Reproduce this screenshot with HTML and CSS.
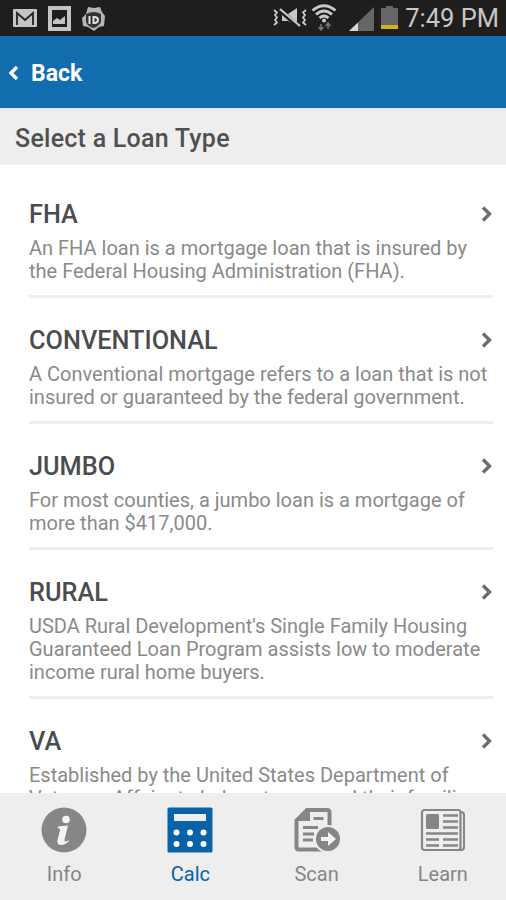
FILE: index.html
```html
<!DOCTYPE html>
<html lang="en">
<head>
    <meta charset="UTF-8">
    <meta name="viewport" content="width=device-width, initial-scale=1.0">
    <title>Select a Loan Type</title>
    <link rel="stylesheet" href="styles.css">
</head>
<body>
    <div class="status-bar">
        <div class="notifications">
            <svg class="mail" width="26" height="20" viewBox="0 0 26 20">
                <rect x="1" y="1" width="24" height="18" rx="1" fill="#c4c4c4"/>
                <path d="M5 17V5l8 7 8-7v12" fill="none" stroke="#222" stroke-width="1.800"/>
            </svg>
            <svg class="photo" width="23" height="25" viewBox="0 0 23 25">
                <path d="M0 0h23v25H0zM4 4v17h15V4z" fill="#c4c4c4" fill-rule="evenodd"/>
                <path d="M5 18v-3l4-3 3 2 5-4v8z" fill="#c4c4c4"/>
            </svg>
            <svg class="shield" width="25" height="25" viewBox="0 0 25 25">
                <path d="M7 1l6 1 6-1 2 5 3 4-1 10-5 1-5 4-6-4-5-1-1-8 4-4z" fill="#b5b5b5"/>
                <path d="M5 8q8-4 15 0v8q-2 4-7.500 6Q6 20 5 16z" fill="#333"/>
                <path d="M8.500 10v8M12.500 11v6h1.500q3-.5 3-3t-3-3z" fill="none" stroke="#ddd" stroke-width="2"/>
            </svg>
        </div>
        <div class="system">
            <svg class="vibrate" width="34" height="22" viewBox="0 0 34 22">
                <path d="M9 7h6l9-6v18l-9-5H9z" fill="#c8c8c8"/>
                <path d="M8 4l18 16" stroke="#1e1e1e" stroke-width="4.500"/>
                <path d="M7 2l20 17" stroke="#c8c8c8" stroke-width="2.200"/>
                <path d="M1 3l3 2.500-2 2.500 2 2.500-2 2.500 2 2.500-3 2.500M33 3l-3 2.500 2 2.500-2 2.500 2 2.500-2 2.500 3 2.500" fill="none" stroke="#c8c8c8" stroke-width="1.800"/>
            </svg>
            <svg class="wifi" width="26" height="27" viewBox="0 0 26 27">
                <g fill="none" stroke="#c8c8c8" stroke-width="2.800">
                    <path d="M1.500 6.500Q13-3 24.500 6.500"/>
                    <path d="M5 10.500q8-7 16 0"/>
                    <path d="M8.500 14q4.500-4 9 0"/>
                </g>
                <circle cx="13" cy="16.500" r="2" fill="#c8c8c8"/>
                <path d="M10 26v-6M7.500 23l2.500 3 2.500-3M17 19v6M14.500 22l2.500-3 2.500 3" fill="none" stroke="#777" stroke-width="1.500"/>
            </svg>
            <svg class="signal" width="25" height="24" viewBox="0 0 25 24">
                <path d="M0 24L25 0v24z" fill="#666"/>
                <path d="M0 24l9-8.500V24z" fill="#d8d8d8"/>
            </svg>
            <svg class="battery" width="17" height="23" viewBox="0 0 17 23">
                <path d="M0 2h5V0h7v2h5v17H0z" fill="#666"/>
                <path d="M0 19h17v4H0z" fill="#d0b219"/>
            </svg>
            <span class="clock">7:49 PM</span>
        </div>
    </div>

    <header class="nav-bar">
        <a class="back" href="#">
            <svg width="11" height="16" viewBox="0 0 11 16"><path d="M9 2L3 8l6 6" fill="none" stroke="#fff" stroke-width="3.400"/></svg>
            <span>Back</span>
        </a>
    </header>

    <h1 class="page-title">Select a Loan Type</h1>

    <main class="loan-list">
        <section class="loan">
            <div class="loan-head">
                <h2>FHA</h2>
                <svg class="arrow" width="12" height="16" viewBox="0 0 12 16"><path d="M2 1.500L8.500 8 2 14.500" /></svg>
            </div>
            <p>An FHA loan is a mortgage loan that is insured by<br>the Federal Housing Administration (FHA).</p>
        </section>
        <section class="loan">
            <div class="loan-head">
                <h2>CONVENTIONAL</h2>
                <svg class="arrow" width="12" height="16" viewBox="0 0 12 16"><path d="M2 1.500L8.500 8 2 14.500" /></svg>
            </div>
            <p>A Conventional mortgage refers to a loan that is not<br>insured or guaranteed by the federal government.</p>
        </section>
        <section class="loan">
            <div class="loan-head">
                <h2>JUMBO</h2>
                <svg class="arrow" width="12" height="16" viewBox="0 0 12 16"><path d="M2 1.500L8.500 8 2 14.500" /></svg>
            </div>
            <p>For most counties, a jumbo loan is a mortgage of<br>more than $417,000.</p>
        </section>
        <section class="loan">
            <div class="loan-head">
                <h2>RURAL</h2>
                <svg class="arrow" width="12" height="16" viewBox="0 0 12 16"><path d="M2 1.500L8.500 8 2 14.500" /></svg>
            </div>
            <p>USDA Rural Development's Single Family Housing<br>Guaranteed Loan Program assists low to moderate<br>income rural home buyers.</p>
        </section>
        <section class="loan">
            <div class="loan-head">
                <h2>VA</h2>
                <svg class="arrow" width="12" height="16" viewBox="0 0 12 16"><path d="M2 1.500L8.500 8 2 14.500" /></svg>
            </div>
            <p>Established by the United States Department of<br>Veterans Affairs to help veterans and their families.</p>
        </section>
    </main>

    <nav class="tab-bar">
        <a class="tab" href="#">
            <svg width="46" height="46" viewBox="0 0 46 46">
                <circle cx="23" cy="23" r="22.500" fill="#868686"/>
                <circle cx="25" cy="12.500" r="3.800" fill="#f4f4f4"/>
                <path d="M17 19.500q5-.5 10-1l-3.500 14q-.5 2 1 2t3-1.500l.5 1q-3.500 4-8 4-4.500 0-3.500-5l2.500-9.500q.5-2-2.500-2.500z" fill="#f4f4f4"/>
            </svg>
            <span>Info</span>
        </a>
        <a class="tab active" href="#">
            <svg width="46" height="46" viewBox="0 0 46 46">
                <rect x=".5" y=".5" width="45" height="45" rx="1.500" fill="#0961a8"/>
                <rect x="7" y="7" width="32" height="7" fill="#eee"/>
                <g fill="#fff">
                    <circle cx="9.500" cy="25.500" r="3"/><circle cx="23" cy="25.500" r="3"/><circle cx="36.500" cy="25.500" r="3"/>
                    <circle cx="9.500" cy="37" r="3"/><circle cx="23" cy="37" r="3"/><circle cx="36.500" cy="37" r="3"/>
                </g>
            </svg>
            <span>Calc</span>
        </a>
        <a class="tab" href="#">
            <svg width="46" height="46" viewBox="0 0 46 46">
                <path d="M13 3h20q2.500 0 2.500 2.500V37q0 5.500-3 5.500H5q-2.500 0-2.500-2.500V13.500z" fill="none" stroke="#868686" stroke-width="4"/>
                <path d="M2 14L13 2h3v12z" fill="#868686"/>
                <path d="M19.500 11.500h10M9 20.500h15M9 27h11M9 33h10" stroke="#868686" stroke-width="3"/>
                <circle cx="34" cy="32" r="14" fill="#eee"/>
                <circle cx="34" cy="32" r="12" fill="#868686"/>
                <path d="M27 30h7v-5l8 7-8 7v-5h-7z" fill="#f4f4f4"/>
            </svg>
            <span>Scan</span>
        </a>
        <a class="tab" href="#">
            <svg width="46" height="46" viewBox="0 0 46 46">
                <path d="M40 5h1q3 0 3 3v32q0 3-3 3H5" fill="none" stroke="#868686" stroke-width="2"/>
                <rect x="2" y="3" width="38.500" height="40" rx="2.500" fill="#eee" stroke="#868686" stroke-width="2.200"/>
                <rect x="6" y="7" width="13" height="15" rx="1.500" fill="#868686"/>
                <path d="M23 8.500h15M23 14.500h15M23 20.500h15M6 26.500h32M6 32.500h13M23 32.500h15M6 38.500h13M23 38.500h15" stroke="#868686" stroke-width="2.400"/>
            </svg>
            <span>Learn</span>
        </a>
    </nav>
</body>
</html>
```
FILE: styles.css
```css
*{
    margin: 0;
    padding: 0;
    box-sizing: border-box;
}
body{
    display: flex;
    flex-direction: column;
    height: 900px;
    overflow: hidden;
    background: #fff;
    font-family: Roboto, "Liberation Sans", sans-serif;
}
a{
    color: inherit;
    text-decoration: none;
}
svg{
    display: block;
    flex-shrink: 0;
}
.status-bar{
    display: flex;
    justify-content: space-between;
    height: 36px;
    flex-shrink: 0;
    padding: 0 7px 0 12px;
    background: #1e1e1e;
}
.notifications, .system{
    display: flex;
    align-items: flex-start;
}
.mail{
    margin-top: 8px;
}
.photo{
    margin: 6px 0 0 10px;
}
.shield{
    margin: 6px 0 0 10px;
}
.vibrate{
    margin-top: 7px;
}
.wifi{
    margin: 4px 0 0 4px;
}
.signal{
    margin: 7px 0 0 12px;
}
.battery{
    margin: 6px 0 0 7px;
}
.clock{
    margin-left: 7px;
    font-size: 25.5px;
    line-height: 36px;
    color: #c8c8c8;
    white-space: nowrap;
}
.nav-bar{
    height: 72px;
    flex-shrink: 0;
    background: #126daf;
}
.back{
    display: flex;
    align-items: center;
    gap: 12px;
    height: 73px;
    padding-left: 8px;
    color: #fff;
    font-size: 23px;
    font-weight: 700;
}
.back span{
    padding-top: 1px;
}
.page-title{
    height: 57px;
    flex-shrink: 0;
    padding-left: 15px;
    border-top: 2px solid #e2e8f0;
    background: #eee;
    color: #505050;
    font-size: 25px;
    font-weight: 500;
    line-height: 57px;
    letter-spacing: 0.25px;
}
.loan-list{
    flex: 1;
    min-height: 0;
    overflow: hidden;
    padding: 7px 13px 0 29px;
}
.loan{
    padding: 27px 0 12px;
    border-bottom: 3px solid #eee;
}
.loan-head{
    display: flex;
    align-items: center;
    justify-content: space-between;
    height: 32px;
    margin-bottom: 6px;
}
.loan h2{
    font-size: 25.3px;
    font-weight: 500;
    line-height: 32px;
    color: #4c4c4c;
}
.arrow{
    margin-bottom: 2px;
}
.arrow path{
    fill: none;
    stroke: #6c6c6c;
    stroke-width: 3.4;
}
.loan p{
    font-size: 20px;
    line-height: 23px;
    color: #8a8a8a;
    white-space: nowrap;
}
.tab-bar{
    display: grid;
    grid-template-columns: repeat(4, 1fr);
    height: 107px;
    flex-shrink: 0;
    padding-left: 1px;
    background: #eee;
}
.tab{
    display: flex;
    flex-direction: column;
    align-items: center;
    padding-top: 14px;
    color: #868686;
    font-size: 20px;
    line-height: 24px;
}
.tab span{
    margin-top: 9px;
}
.tab.active{
    color: #0961a8;
}
```
